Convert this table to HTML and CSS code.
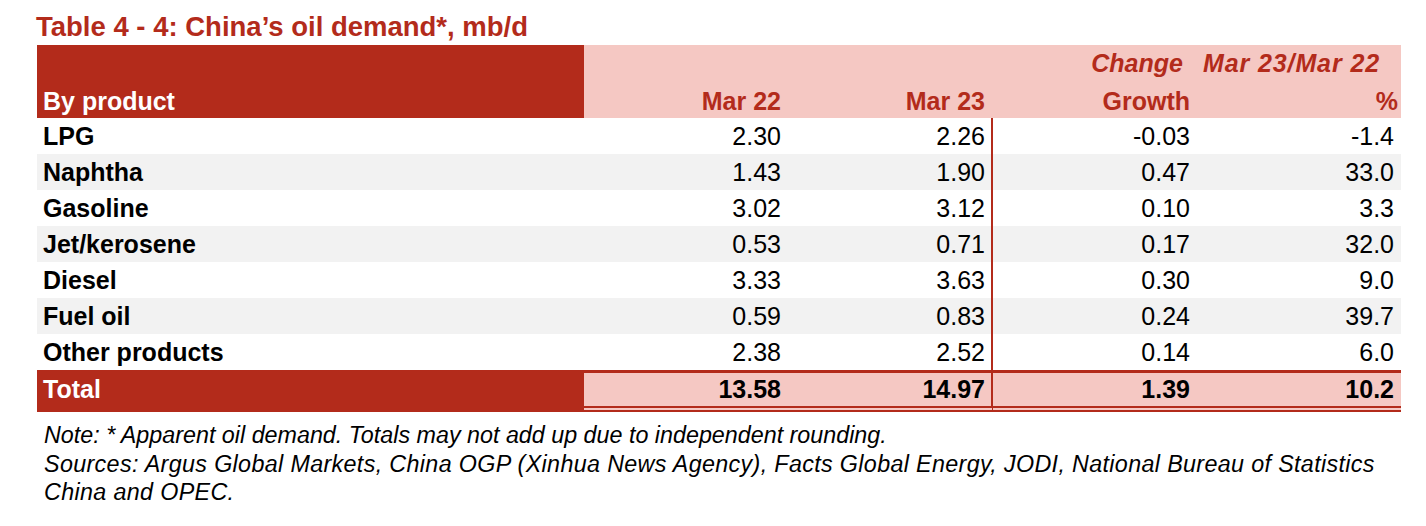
FILE: index.html
```html
<!DOCTYPE html>
<html lang="en">
<head>
<meta charset="utf-8">
<title>China's oil demand</title>
<link rel="stylesheet" href="styles.css">
</head>
<body>
<div class="page">
  <h1 class="title">Table 4 - 4: China’s oil demand*, mb/d</h1>
  <div class="table">
    <div class="thead">
      <div class="th-label">By product</div>
      <div class="th-group"><span>Change</span><span class="period">Mar 23/Mar 22</span></div>
      <div class="th c2">Mar 22</div>
      <div class="th c3">Mar 23</div>
      <div class="th c4">Growth</div>
      <div class="th c5 pct">%</div>
    </div>
    <div class="row"><div class="lbl">LPG</div><div class="num c2">2.30</div><div class="num c3">2.26</div><div class="num c4">-0.03</div><div class="num c5">-1.4</div></div>
    <div class="row alt"><div class="lbl">Naphtha</div><div class="num c2">1.43</div><div class="num c3">1.90</div><div class="num c4">0.47</div><div class="num c5">33.0</div></div>
    <div class="row"><div class="lbl">Gasoline</div><div class="num c2">3.02</div><div class="num c3">3.12</div><div class="num c4">0.10</div><div class="num c5">3.3</div></div>
    <div class="row alt"><div class="lbl">Jet/kerosene</div><div class="num c2">0.53</div><div class="num c3">0.71</div><div class="num c4">0.17</div><div class="num c5">32.0</div></div>
    <div class="row"><div class="lbl">Diesel</div><div class="num c2">3.33</div><div class="num c3">3.63</div><div class="num c4">0.30</div><div class="num c5">9.0</div></div>
    <div class="row alt"><div class="lbl">Fuel oil</div><div class="num c2">0.59</div><div class="num c3">0.83</div><div class="num c4">0.24</div><div class="num c5">39.7</div></div>
    <div class="row"><div class="lbl">Other products</div><div class="num c2">2.38</div><div class="num c3">2.52</div><div class="num c4">0.14</div><div class="num c5">6.0</div></div>
    <div class="row total"><div class="lbl">Total</div><div class="num c2">13.58</div><div class="num c3">14.97</div><div class="num c4">1.39</div><div class="num c5">10.2</div></div>
  </div>
  <div class="notes">
    <p>Note: * Apparent oil demand. Totals may not add up due to independent rounding.</p>
    <p class="src">Sources: Argus Global Markets, China OGP (Xinhua News Agency), Facts Global Energy, JODI, National Bureau of Statistics<br>China and OPEC.</p>
  </div>
</div>
</body>
</html>
```
FILE: styles.css
```css
html, body {
  margin: 0;
  padding: 0;
  background: #ffffff;
}

body {
  font-family: "Liberation Sans", Arial, Helvetica, sans-serif;
  color: #000000;
}

.page {
  padding: 12px 0 0 36px;
}

.title {
  margin: 0 0 3px 0;
  font-size: 27.5px;
  line-height: 30px;
  font-weight: bold;
  color: #b32b1b;
}

.table {
  margin-left: 1px;
  width: 1364px;
}

.thead,
.row {
  display: grid;
  grid-template-columns: 547px 205px 204px 205px 203px;
}

.thead {
  grid-template-rows: 37px 36px;
  background: #f5c8c3;
  color: #b32b1b;
  font-size: 25px;
  font-weight: bold;
}

.th-label {
  grid-row: 1 / 3;
  grid-column: 1;
  background: #b32b1b;
  color: #ffffff;
  display: flex;
  align-items: flex-end;
  padding: 0 0 2px 6px;
  line-height: normal;
}

.th-group {
  grid-row: 1;
  grid-column: 4 / 6;
  display: flex;
  justify-content: flex-end;
  gap: 20px;
  font-style: italic;
  padding: 4px 21px 0 0;
  line-height: normal;
  white-space: nowrap;
}

.th-group .period {
  letter-spacing: 0.9px;
}

.th {
  grid-row: 2;
  display: flex;
  align-items: flex-end;
  justify-content: flex-end;
  padding: 0 8px 2px 0;
  line-height: normal;
}

.thead .c2 { grid-column: 2; }
.thead .c3 { grid-column: 3; }
.thead .c4 { grid-column: 4; }
.thead .c5 { grid-column: 5; }

.th.pct {
  padding-right: 3px;
}

.row {
  height: 36px;
  font-size: 25px;
  line-height: 36px;
}

.row.alt {
  background: #f2f2f2;
}

.lbl {
  font-weight: bold;
  padding-left: 6px;
  white-space: nowrap;
}

.num {
  text-align: right;
  padding-right: 8px;
  box-sizing: border-box;
}

.row .c3 {
  border-right: 2px solid #b32b1b;
  padding-right: 6px;
}

.row .c5 {
  padding-right: 7px;
}

.row.total {
  height: 42px;
  line-height: 33px;
  font-weight: bold;
}

.row.total > div {
  box-sizing: border-box;
  border-top: 3px solid #b32b1b;
  border-bottom: 6px double #b32b1b;
  background: #f5c8c3;
}

.row.total .lbl {
  background: #b32b1b;
  color: #ffffff;
}

.notes {
  margin-top: 9px;
  font-size: 23.3px;
  line-height: 28.5px;
  font-style: italic;
}

.notes p {
  margin: 0;
  padding-left: 8px;
  white-space: nowrap;
}

.notes .src {
  letter-spacing: 0.35px;
}
```
